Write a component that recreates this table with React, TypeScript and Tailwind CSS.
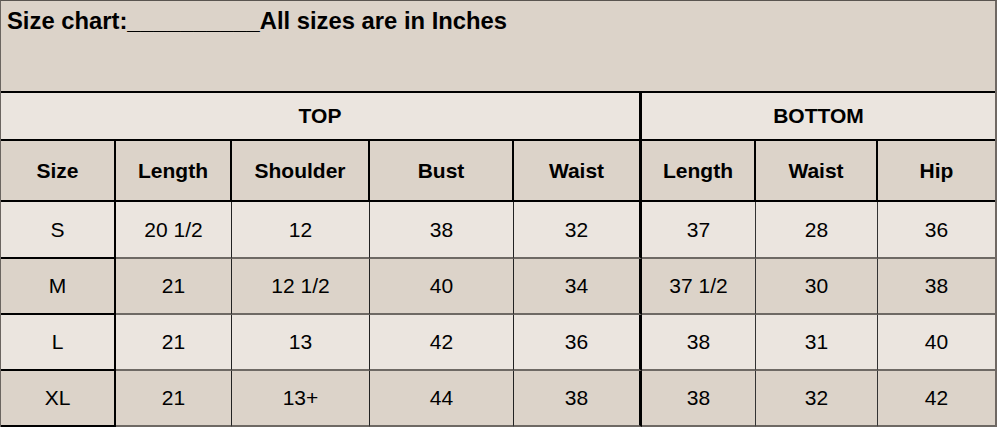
import React from "react";

type Row = { size: string; top: string[]; bottom: string[] };

const rows: Row[] = [
  { size: "S", top: ["20 1/2", "12", "38", "32"], bottom: ["37", "28", "36"] },
  { size: "M", top: ["21", "12 1/2", "40", "34"], bottom: ["37 1/2", "30", "38"] },
  { size: "L", top: ["21", "13", "42", "36"], bottom: ["38", "31", "40"] },
  { size: "XL", top: ["21", "13+", "44", "38"], bottom: ["38", "32", "42"] },
];

// right-border classes per column (size, 4 top cols, 3 bottom cols)
const headBorders = [
  "border-r-2 border-black",
  "border-r-2 border-black",
  "border-r-2 border-black",
  "border-r-2 border-black",
  "border-r-[3px] border-black",
  "border-r-2 border-black",
  "border-r-2 border-black",
  "",
];

const cellBorders = [
  "border-r-2 border-r-black",
  "border-r-[1.5px] border-r-[#222]",
  "border-r-[1.5px] border-r-[#222]",
  "border-r-[1.5px] border-r-[#222]",
  "border-r-[3px] border-r-black",
  "border-r-[1.5px] border-r-[#333]",
  "border-r-[1.5px] border-r-[#333]",
  "",
];

const rowHeights = ["h-[57px]", "h-[56px]", "h-[56px]", "h-[56px]"];

export default function App() {
  return (
    <div
      className="h-[427px] w-[997px] overflow-hidden border-l border-r-2 border-t border-l-[#6b6560] border-r-[#6f6863] border-t-[#5a5550] bg-[#dcd3c9] text-black"
      style={{ fontFamily: '"Liberation Sans", Arial, sans-serif' }}
    >
      <div className="h-[92px] border-b-2 border-black pl-[6px] pt-[2px] text-[23.8px] font-bold">
        Size chart:__________All sizes are in Inches
      </div>

      <div className="grid grid-cols-[115px_116px_138px_144px_128px_114px_122px_1fr]">
        <div className="col-span-5 flex h-[48px] items-center justify-center border-b-2 border-r-[3px] border-black bg-[#ebe5df] text-[21px] font-bold">
          TOP
        </div>
        <div className="col-span-3 flex h-[48px] items-center justify-center border-b-2 border-black bg-[#ebe5df] text-[21px] font-bold">
          BOTTOM
        </div>

        {["Size", "Length", "Shoulder", "Bust", "Waist", "Length", "Waist", "Hip"].map((h, i) => (
          <div
            key={i}
            className={`flex h-[61px] items-center justify-center border-b-2 border-b-black bg-[#dcd3c9] text-[21px] font-bold ${headBorders[i]}`}
          >
            {h}
          </div>
        ))}

        {rows.map((r, ri) => {
          const bg = ri % 2 === 0 ? "bg-[#ebe5df]" : "bg-[#dcd3c9]";
          const cells = [r.size, ...r.top, ...r.bottom];
          return cells.map((c, ci) => (
            <div
              key={`${ri}-${ci}`}
              className={`flex items-center justify-center border-b-2 text-[21px] ${rowHeights[ri]} ${bg} ${cellBorders[ci]} ${
                ci === 0 ? "border-b-black" : "border-b-[#6e6964]"
              }`}
            >
              {c}
            </div>
          ));
        })}
      </div>
    </div>
  );
}
